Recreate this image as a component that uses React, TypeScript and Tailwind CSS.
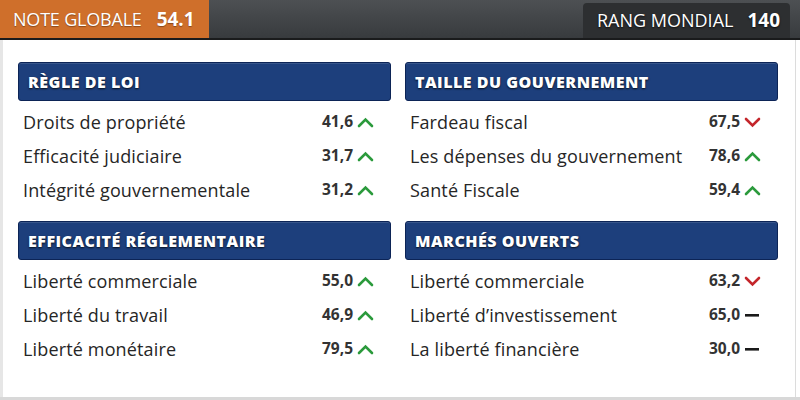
import React from "react";

type Trend = "up" | "down" | "flat";
type Row = { label: string; value: string; trend: Trend };
type Section = { title: string; rows: Row[] };

const left: Section[] = [
  {
    title: "RÈGLE DE LOI",
    rows: [
      { label: "Droits de propriété", value: "41,6", trend: "up" },
      { label: "Efficacité judiciaire", value: "31,7", trend: "up" },
      { label: "Intégrité gouvernementale", value: "31,2", trend: "up" },
    ],
  },
  {
    title: "EFFICACITÉ RÉGLEMENTAIRE",
    rows: [
      { label: "Liberté commerciale", value: "55,0", trend: "up" },
      { label: "Liberté du travail", value: "46,9", trend: "up" },
      { label: "Liberté monétaire", value: "79,5", trend: "up" },
    ],
  },
];

const right: Section[] = [
  {
    title: "TAILLE DU GOUVERNEMENT",
    rows: [
      { label: "Fardeau fiscal", value: "67,5", trend: "down" },
      { label: "Les dépenses du gouvernement", value: "78,6", trend: "up" },
      { label: "Santé Fiscale", value: "59,4", trend: "up" },
    ],
  },
  {
    title: "MARCHÉS OUVERTS",
    rows: [
      { label: "Liberté commerciale", value: "63,2", trend: "down" },
      { label: "Liberté d’investissement", value: "65,0", trend: "flat" },
      { label: "La liberté financière", value: "30,0", trend: "flat" },
    ],
  },
];

function TrendIcon({ trend }: { trend: Trend }) {
  if (trend === "flat") {
    return (
      <svg width="17" height="12" viewBox="0 0 17 12">
        <rect x="1" y="5" width="14" height="2.6" fill="#1a1a1a" />
      </svg>
    );
  }
  const up = trend === "up";
  return (
    <svg width="17" height="12" viewBox="0 0 17 12">
      <polyline
        points={up ? "2,10 8.5,3.5 15,10" : "2,3 8.5,9.5 15,3"}
        fill="none"
        stroke={up ? "#2b9a3c" : "#c4262b"}
        strokeWidth="2.6"
        strokeLinecap="round"
        strokeLinejoin="miter"
      />
    </svg>
  );
}

function SectionBlock({ s, first }: { s: Section; first: boolean }) {
  return (
    <div className={first ? "" : "mt-[14px]"}>
      <div className="h-[39px] rounded-[3px] border border-[#0c2456] bg-[#1d3f7c] flex items-center pl-[9px] shadow-[inset_0_1px_0_rgba(255,255,255,0.12)]">
        <span className="text-white font-extrabold text-[16px] tracking-[0.5px] [text-shadow:0_1px_2px_rgba(0,0,0,0.8)]">
          {s.title}
        </span>
      </div>
      <div className="mt-[4px]">
        {s.rows.map((r) => (
          <div key={r.label} className="h-[34px] flex items-center pl-[5px] pr-[17px]">
            <span className="flex-1 text-[18px] tracking-[0.15px] text-[#262626]">{r.label}</span>
            <span className="text-[15.5px] font-bold text-[#333]">{r.value}</span>
            <span className="ml-[4px] flex items-center">
              <TrendIcon trend={r.trend} />
            </span>
          </div>
        ))}
      </div>
    </div>
  );
}

export default function App() {
  return (
    <div
      className="w-[800px] h-[400px] bg-white relative overflow-hidden"
      style={{ fontFamily: "'Open Sans', 'Liberation Sans', sans-serif" }}
    >
      <div className="h-[40px] flex bg-gradient-to-b from-[#4d5053] to-[#383b3e] border-b-2 border-[#1a1b1c]">
        <div className="w-[209px] bg-[#cf6f2b] flex items-center pl-[13px] gap-[15px] text-white [text-shadow:0_1px_1px_rgba(0,0,0,0.35)]">
          <span className="text-[18px] font-medium tracking-[-0.2px]">NOTE GLOBALE</span>
          <span className="text-[19px] font-bold">54.1</span>
        </div>
        <div className="flex-1 flex justify-end items-end pr-[10px]">
          <div className="h-[35px] w-[207px] rounded-t-[4px] bg-[#2d2f31] flex items-center pl-[14px] gap-[14px] text-white [text-shadow:0_1px_2px_rgba(0,0,0,0.8)]">
            <span className="text-[18px] font-medium">RANG MONDIAL</span>
            <span className="text-[19px] font-bold">140</span>
          </div>
        </div>
      </div>
      <div className="flex gap-[14px] pl-[15px] pr-[22px] pt-[22px] border-l-[3px] border-[#e6e6e6] h-[358px]">
        <div className="flex-1">
          {left.map((s, i) => (
            <SectionBlock key={s.title} s={s} first={i === 0} />
          ))}
        </div>
        <div className="flex-1">
          {right.map((s, i) => (
            <SectionBlock key={s.title} s={s} first={i === 0} />
          ))}
        </div>
      </div>
      <div className="absolute right-[4px] top-[40px] bottom-0 w-px bg-[#dcdcdc]" />
      <div className="absolute left-0 right-0 bottom-0 h-[3px] bg-[#d8d8d8]" />
    </div>
  );
}
